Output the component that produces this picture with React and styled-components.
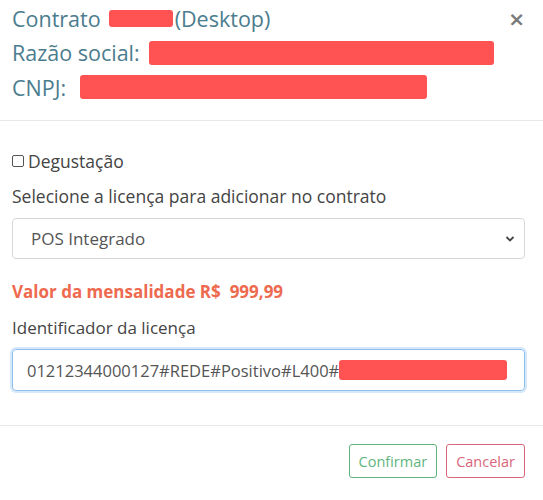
import React from "react";
import styled, { createGlobalStyle } from "styled-components";

const Global = createGlobalStyle`
  html, body { margin: 0; padding: 0; background: #fff; }
  body { font-family: "Open Sans", "Noto Sans", sans-serif; color: #444; }
  * { box-sizing: border-box; }
`;

const Modal = styled.div`
  width: 543px;
  display: flex;
  flex-direction: column;
`;

const Header = styled.div`
  position: relative;
  padding: 1px 12px 0 12px;
  height: 121px;
  border-bottom: 1px solid #e6e8ea;
`;

const TitleLine = styled.div`
  display: flex;
  align-items: center;
  height: 34.5px;
  font-size: 21.5px;
  color: #4b7c8e;
  white-space: nowrap;
`;

const Redact = styled.span`
  display: inline-block;
  flex: none;
  background: #ff5252;
  border-radius: 3px;
  width: ${(p) => p.w}px;
  height: ${(p) => p.h || 24}px;
  margin-left: ${(p) => p.ml || 0}px;
  margin-right: ${(p) => p.mr || 0}px;
`;

const Close = styled.button`
  position: absolute;
  top: 9px;
  right: 18px;
  border: 0;
  background: none;
  padding: 0;
  font-size: 20px;
  line-height: 20px;
  color: #7a7a7a;
  font-family: "DejaVu Sans", sans-serif;
  font-weight: bold;
`;

const Body = styled.div`
  padding: 28px 18px 0 12px;
  height: 305px;
  border-bottom: 1px solid #e6e8ea;
  display: flex;
  flex-direction: column;
`;

const CheckRow = styled.label`
  display: flex;
  align-items: center;
  gap: 4px;
  font-size: 17.5px;
  color: #444;
  height: 24px;
`;

const Box = styled.span`
  width: 12px;
  height: 12px;
  border: 1px solid #555;
  border-radius: 2px;
  background: #fff;
`;

const Label = styled.div`
  font-size: ${(p) => p.fs || 17}px;
  color: #444;
  margin-top: ${(p) => p.mt}px;
  height: 22px;
  line-height: 22px;
  white-space: nowrap;
`;

const Select = styled.div`
  margin-top: 11px;
  height: 41px;
  border: 1px solid #d6d9dc;
  border-radius: 4px;
  display: flex;
  align-items: center;
  justify-content: space-between;
  padding: 0 9px 0 18px;
  font-size: 17px;
  color: #555;
`;

const Price = styled.div`
  margin-top: 22px;
  font-size: 17px;
  font-weight: bold;
  color: #ee6a4f;
  height: 22px;
  line-height: 22px;
`;

const Input = styled.div`
  margin-top: 10px;
  height: 42px;
  border: 1px solid #8dbfee;
  border-radius: 4px;
  box-shadow: 0 0 0 2px rgba(140, 190, 240, 0.35);
  display: flex;
  align-items: center;
  padding: 0 0 0 14px;
  font-size: 16.5px;
  color: #555;
  white-space: nowrap;
`;

const Footer = styled.div`
  display: flex;
  justify-content: flex-end;
  gap: 9px;
  padding: 18px 18px 0 0;
`;

const Btn = styled.button`
  height: 34px;
  padding: 0 9px;
  background: #fff;
  border: 1px solid ${(p) => p.c};
  color: ${(p) => p.c};
  border-radius: 3px;
  font-family: "Open Sans", "Noto Sans", sans-serif;
  font-size: 14.5px;
`;

export default function App() {
  return (
    <>
      <Global />
      <Modal>
        <Header>
          <TitleLine>
            Contrato
            <Redact w={64} h={17} ml={8} mr={2} />
            (Desktop)
          </TitleLine>
          <TitleLine>
            Razão social:<Redact w={345} ml={9} />
          </TitleLine>
          <TitleLine>
            CNPJ:<Redact w={347} ml={14} />
          </TitleLine>
          <Close>×</Close>
        </Header>
        <Body>
          <CheckRow>
            <Box />
            Degustação
          </CheckRow>
          <Label mt={12} fs={17.5}>Selecione a licença para adicionar no contrato</Label>
          <Select>
            <span>POS Integrado</span>
            <svg width="10" height="8" viewBox="0 0 10 8">
              <path d="M1.5 2 L5 5.5 L8.5 2" fill="none" stroke="#444" strokeWidth="1.8" />
            </svg>
          </Select>
          <Price>Valor da mensalidade R$&nbsp; 999,99</Price>
          <Label mt={14}>Identificador da licença</Label>
          <Input>
            01212344000127#REDE#Positivo#L400#
            <Redact w={168} h={20} />
          </Input>
        </Body>
        <Footer>
          <Btn c="#5fb47d">Confirmar</Btn>
          <Btn c="#d9667a">Cancelar</Btn>
        </Footer>
      </Modal>
    </>
  );
}
